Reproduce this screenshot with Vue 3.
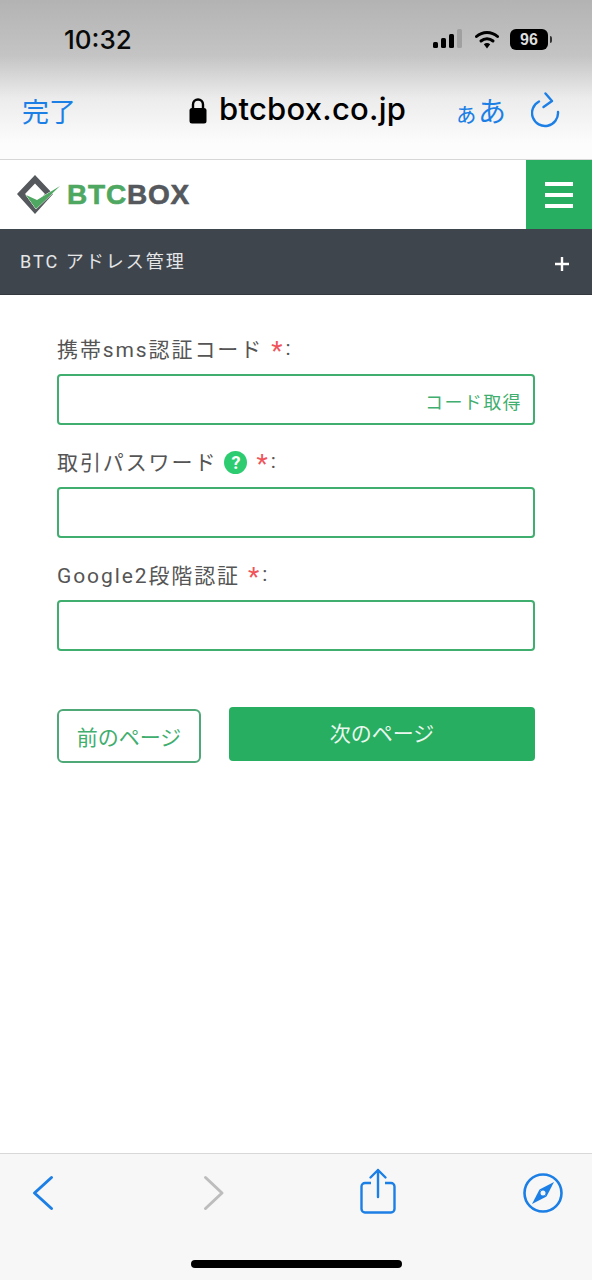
<template>
  <div class="phone">
    <header class="safari-top">
      <div class="status">
        <span class="time">10:32</span>
        <div class="status-icons">
          <svg class="signal" width="29" height="20" viewBox="0 0 29 20">
            <rect x="0" y="13" width="5" height="6" rx="1.5" fill="#000" />
            <rect x="8" y="9" width="5" height="10" rx="1.5" fill="#000" />
            <rect x="16" y="5" width="5" height="14" rx="1.5" fill="#000" />
            <rect x="24" y="0" width="5" height="19" rx="1.5" fill="#a0a0a0" />
          </svg>
          <svg class="wifi" width="24" height="19" viewBox="0 0 24 19">
            <path d="M1.5 6.5C7.5 1 16.5 1 22.5 6.5" fill="none" stroke="#000" stroke-width="3" stroke-linecap="round" />
            <path d="M6 11C9.5 8 14.5 8 18 11" fill="none" stroke="#000" stroke-width="3" stroke-linecap="round" />
            <path d="M8.8 14.2C10.8 12.6 13.2 12.6 15.2 14.2L12 18.5Z" fill="#000" />
          </svg>
          <div class="battery"><span>96</span></div>
          <i class="battery-tip"></i>
        </div>
      </div>
      <div class="urlbar">
        <span class="done">完了</span>
        <div class="address">
          <svg width="18" height="27" viewBox="0 0 18 27">
            <path d="M4 12V7.5a5 5 0 0 1 10 0V12" fill="none" stroke="#000" stroke-width="2.4" />
            <rect x="0.5" y="11" width="17" height="15.5" rx="2.5" fill="#000" />
          </svg>
          <span class="host">btcbox.co.jp</span>
        </div>
        <span class="aa"><small>ぁ</small>あ</span>
        <svg class="reload" width="30" height="36" viewBox="0 0 30 36">
          <path d="M8 9.5A13 13 0 1 0 27 20" fill="none" stroke="#1c7fe6" stroke-width="2.4" stroke-linecap="round" />
          <path d="M14.5 1.5L21 9L12.5 15" fill="none" stroke="#1c7fe6" stroke-width="2.4" stroke-linecap="round" stroke-linejoin="round" />
        </svg>
      </div>
    </header>

    <nav class="navbar">
      <div class="logo">
        <svg width="44" height="42" viewBox="0 0 44 42">
          <path d="M0 20L18 1L36 20L18 40ZM8 20L18 30L28 20L18 9.5Z" fill="#55585c" fill-rule="evenodd" />
          <path d="M9 21L20 26L43 12L19 35Z" fill="#4fa861" stroke="#fff" stroke-width="1" paint-order="stroke" />
        </svg>
        <span class="logo-text"><b>BTC</b>BOX</span>
      </div>
      <button class="burger"><i></i><i></i><i></i></button>
    </nav>

    <div class="section-bar">
      <span>BTC アドレス管理</span>
      <svg width="14" height="14" viewBox="0 0 14 14">
        <path d="M7 0V14M0 7H14" stroke="#fff" stroke-width="2.4" />
      </svg>
    </div>

    <main class="form">
      <div class="field">
        <label>携帯sms認証コード <em>*</em>:</label>
        <div class="input-wrap">
          <input type="text" />
          <span class="get-code">コード取得</span>
        </div>
      </div>
      <div class="field">
        <label>取引パスワード <span class="help">?</span><em>*</em>:</label>
        <div class="input-wrap"><input type="text" /></div>
      </div>
      <div class="field">
        <label>Google2段階認証 <em>*</em>:</label>
        <div class="input-wrap"><input type="text" /></div>
      </div>
      <div class="actions">
        <button class="prev">前のページ</button>
        <button class="next">次のページ</button>
      </div>
    </main>

    <footer class="safari-bottom">
      <div class="tools">
        <svg class="back" width="24" height="38" viewBox="0 0 24 38">
          <path d="M20.5 3.5L3.5 19L20.5 34.5" fill="none" stroke="#1c7fe6" stroke-width="3" stroke-linecap="round" stroke-linejoin="round" />
        </svg>
        <svg class="forward" width="24" height="38" viewBox="0 0 24 38">
          <path d="M3.5 3.5L20 19L3.5 34.5" fill="none" stroke="#bdbdbd" stroke-width="3" stroke-linecap="round" stroke-linejoin="round" />
        </svg>
        <svg class="share" width="36" height="46" viewBox="0 0 36 46">
          <path d="M11 15H5a3.5 3.5 0 0 0-3.5 3.5V41a3.5 3.5 0 0 0 3.5 3.5H31a3.5 3.5 0 0 0 3.5-3.5V18.500A3.5 3.5 0 0 0 31 15H25" fill="none" stroke="#1c7fe6" stroke-width="2.4" />
          <path d="M18 29V2M10.5 9.5L18 2L25.5 9.5" fill="none" stroke="#1c7fe6" stroke-width="2.4" stroke-linecap="round" stroke-linejoin="round" />
        </svg>
        <svg class="compass" width="40" height="40" viewBox="0 0 40 40">
          <circle cx="20" cy="20" r="18.5" fill="none" stroke="#1c7fe6" stroke-width="2.6" />
          <path d="M31 9L23.5 23.5L16.5 16.5Z" fill="#1c7fe6" />
          <path d="M9 31L16.5 16.5L23.5 23.5Z" fill="#1c7fe6" />
          <circle cx="20" cy="20" r="2.5" fill="#f7f7f7" />
        </svg>
      </div>
      <div class="home-bar"></div>
    </footer>
  </div>
</template>

<script setup>
</script>

<style scoped>
.phone {
  width: 592px;
  height: 1280px;
  display: flex;
  flex-direction: column;
  background: #fff;
  overflow: hidden;
  font-family: "Liberation Sans", "Noto Sans CJK JP", sans-serif;
}

.safari-top {
  height: 160px;
  box-sizing: border-box;
  border-bottom: 1px solid #d6d6d6;
  background: linear-gradient(#b3b3b3 0%, #c4c4c4 35%, #ececec 62%, #fcfcfc 90%);
}

.status {
  height: 78px;
  display: flex;
  justify-content: space-between;
  align-items: center;
  padding: 0 40px 0 64px;
}

.time {
  font-size: 26px;
  font-weight: 500;
  font-family: Inter, sans-serif;
  color: #0a0a0a;
}

.status-icons {
  display: flex;
  align-items: center;
}

.signal {
  margin-right: 13px;
}

.wifi {
  margin-right: 11px;
}

.battery {
  width: 38px;
  height: 21px;
  border-radius: 6px;
  background: #000;
  color: #ddd;
  font-size: 16px;
  font-weight: bold;
  text-align: center;
  line-height: 21px;
}

.battery-tip {
  width: 2px;
  height: 7px;
  margin-left: 2px;
  background: #333;
  border-radius: 0 2px 2px 0;
}

.urlbar {
  height: 64px;
  display: flex;
  align-items: center;
  padding-left: 22px;
}

.done {
  width: 167px;
  font-size: 27px;
  color: #1c7fe6;
}

.address {
  display: flex;
  align-items: center;
  gap: 12px;
  width: 265px;
  font-size: 31px;
  font-weight: 500;
  letter-spacing: 0.25px;
  font-family: Inter, sans-serif;
  color: #000;
}

.host {
  margin-bottom: 4px;
}

.aa {
  font-size: 28px;
  color: #1c7fe6;
  width: 77px;
}

.aa small {
  font-size: 24px;
}

.navbar {
  height: 69px;
  display: flex;
  justify-content: space-between;
  background: #fff;
}

.logo {
  display: flex;
  align-items: center;
  gap: 6px;
  padding-left: 17px;
}

.logo-text {
  font-size: 28px;
  font-weight: bold;
  color: #55585c;
  letter-spacing: 0.8px;
  font-family: "Liberation Sans", sans-serif;
  -webkit-text-stroke: 0.6px currentColor;
}

.logo-text b {
  color: #4fa861;
}

.burger {
  width: 66px;
  border: none;
  background: #27ae60;
  display: flex;
  flex-direction: column;
  justify-content: center;
  align-items: center;
  gap: 7px;
  padding: 0;
}

.burger i {
  width: 28px;
  height: 4px;
  background: #fff;
}

.section-bar {
  height: 66px;
  box-sizing: border-box;
  padding: 0 23px 4px 20px;
  display: flex;
  justify-content: space-between;
  align-items: center;
  background: #3f454c;
  border-bottom: 1px solid #33383e;
  color: #e4e6e8;
  font-size: 18px;
  letter-spacing: 2px;
  font-family: Roboto, "Noto Sans CJK JP", sans-serif;
}

.section-bar svg {
  margin-top: 8px;
}

.form {
  flex: 1;
  padding: 38px 57px 0;
  font-family: Roboto, "Noto Sans CJK JP", sans-serif;
}

.field {
  margin-bottom: 21px;
}

.field label {
  display: flex;
  align-items: center;
  height: 30px;
  margin-bottom: 11px;
  font-size: 21px;
  letter-spacing: 1.9px;
  color: #555;
  white-space: pre;
}

.field em {
  font-style: normal;
  font-size: 26px;
  line-height: 30px;
  height: 24px;
  color: #f0545a;
  letter-spacing: 0;
  margin: 0 3px 0 1px;
}

.help {
  width: 23px;
  height: 23px;
  border-radius: 50%;
  margin: 2px 8px 0 0;
  background: #2ecc71;
  color: #fff;
  font-size: 18px;
  font-weight: bold;
  letter-spacing: 0;
  text-align: center;
  line-height: 23px;
}

.input-wrap {
  position: relative;
  height: 51px;
  box-sizing: border-box;
  border: 2px solid #3fae6e;
  border-radius: 4px;
}

.input-wrap input {
  width: 100%;
  height: 100%;
  box-sizing: border-box;
  border: none;
  outline: none;
  background: transparent;
}

.get-code {
  position: absolute;
  right: 11px;
  top: 12px;
  font-size: 18px;
  letter-spacing: 1.4px;
  color: #3fae6e;
}

.actions {
  display: flex;
  align-items: flex-start;
  gap: 28px;
  margin-top: 56px;
}

.prev {
  width: 144px;
  height: 54px;
  margin-top: 2px;
  border: 2px solid #4fa878;
  border-radius: 6px;
  background: #fff;
  color: #3fae6e;
  font-size: 21px;
  font-family: inherit;
}

.next {
  flex: 1;
  height: 54px;
  padding-bottom: 5px;
  border: none;
  border-radius: 4px;
  background: #27ae60;
  color: #e9f7ef;
  font-size: 21px;
  font-family: inherit;
}

.safari-bottom {
  height: 127px;
  box-sizing: border-box;
  border-top: 1px solid #d8d8d8;
  background: #f7f7f7;
}

.tools {
  height: 78px;
  display: flex;
  align-items: center;
  padding-left: 31px;
}

.forward {
  margin-left: 147px;
}

.share {
  margin: 0 0 4px 134px;
}

.compass {
  margin-left: 127px;
}

.home-bar {
  width: 211px;
  height: 8px;
  margin: 28px auto 0;
  border-radius: 4px;
  background: #000;
}
</style>
